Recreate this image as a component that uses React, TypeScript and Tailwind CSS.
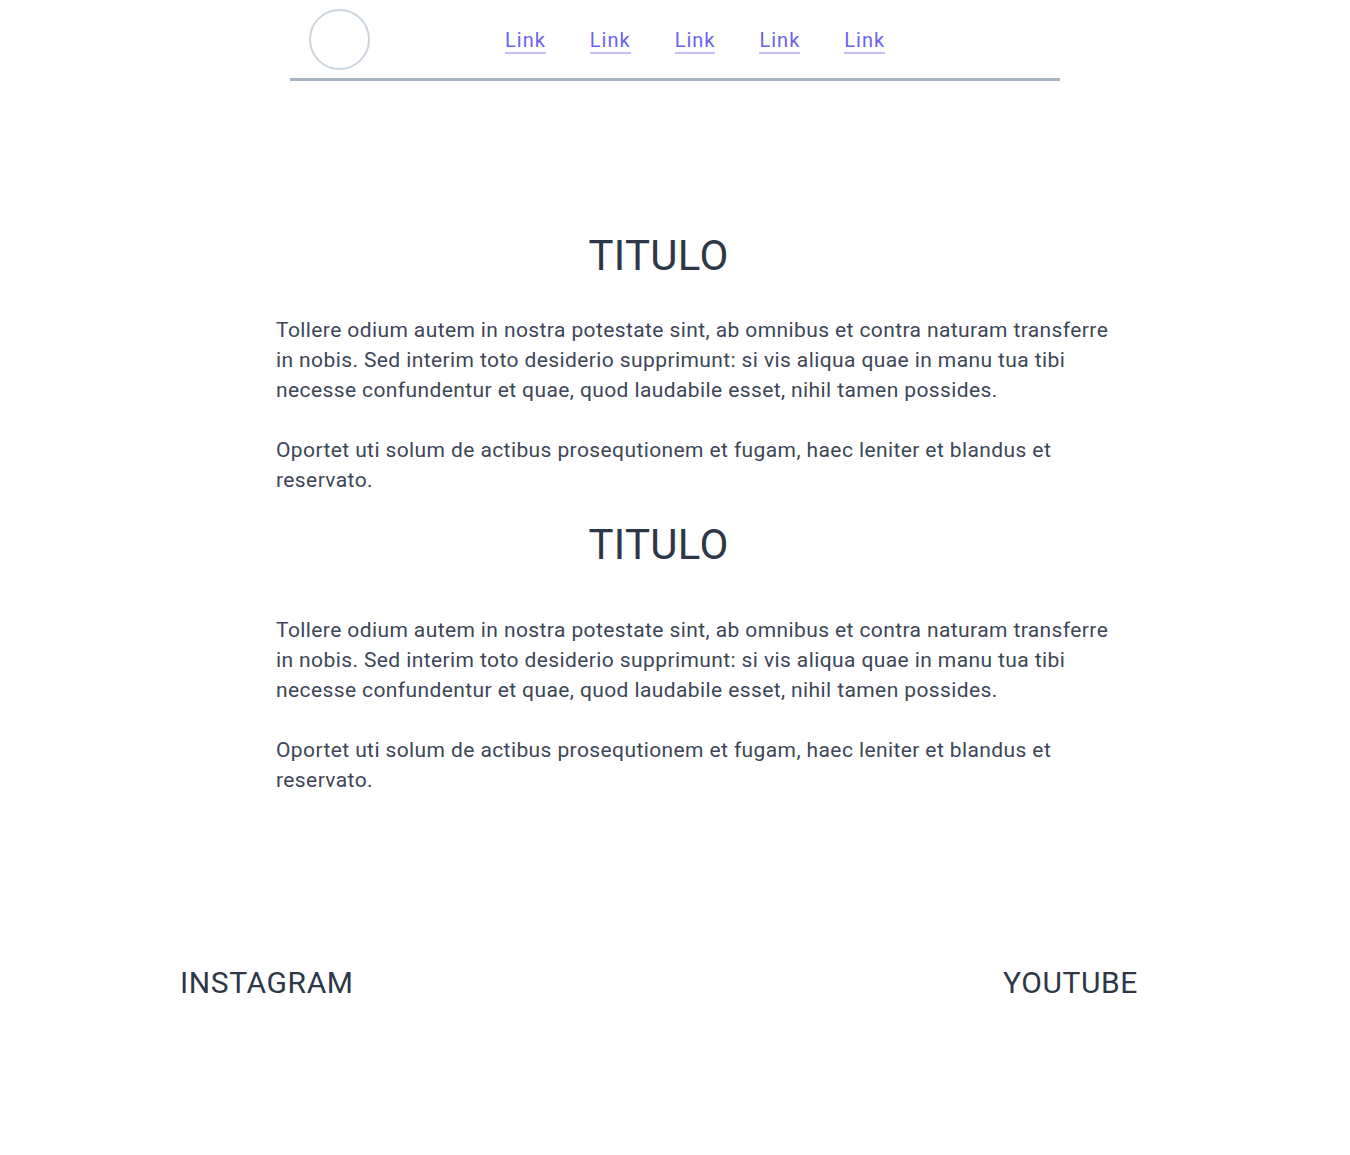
const links = ["Link", "Link", "Link", "Link", "Link"];

const Section = ({ gap }: { gap: string }) => (
  <section className="w-[850px] ml-[276px]">
    <h1
      className={`pr-[85px] text-center text-[42px] leading-[50px] tracking-[0.3px] text-[#2d3748] ${gap}`}
    >
      TITULO
    </h1>
    <p className="text-[21px] leading-[30px] tracking-[0.4px] text-[#3c4657]">
      Tollere odium autem in nostra potestate sint, ab omnibus et contra naturam transferre in
      nobis. Sed interim toto desiderio supprimunt: si vis aliqua quae in manu tua tibi necesse
      confundentur et quae, quod laudabile esset, nihil tamen possides.
    </p>
    <p className="mt-[30px] text-[21px] leading-[30px] tracking-[0.4px] text-[#3c4657]">
      Oportet uti solum de actibus prosequtionem et fugam, haec leniter et blandus et reservato.
    </p>
  </section>
);

export default function App() {
  return (
    <div className="min-h-[1155px] bg-white font-['Roboto',sans-serif]">
      <header className="mx-auto flex h-[81px] w-[770px] items-start border-b-[3px] border-[#a9b4c2]">
        <div className="ml-[19px] mt-[9px] h-[61px] w-[61px] rounded-full border-2 border-[#cbd5e0]" />
        <nav className="ml-[135px] flex gap-[44px] pt-[28px]">
          {links.map((l, i) => (
            <a
              key={i}
              href="#"
              className="border-b-2 border-[#c3c0fb] text-[20px] leading-[24px] tracking-[1px] text-[#6b63f0]"
            >
              {l}
            </a>
          ))}
        </nav>
      </header>

      <main className="pt-[150px]">
        <Section gap="mb-[34px]" />
        <div className="mt-[25px]">
          <Section gap="mb-[45px]" />
        </div>
      </main>

      <footer className="mt-[170px] flex justify-between pl-[180px] pr-[212px] text-[30px] leading-[36px] tracking-[0.6px] text-[#2d3748]">
        <span>INSTAGRAM</span>
        <span>YOUTUBE</span>
      </footer>
    </div>
  );
}
